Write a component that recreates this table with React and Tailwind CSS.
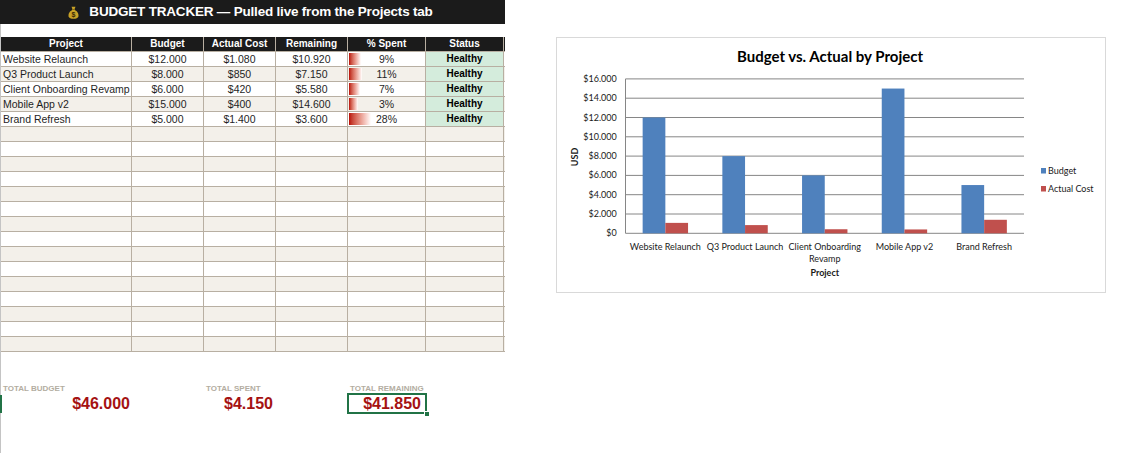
import React from 'react';

const projects = [
  { name: 'Website Relaunch', budget: '$12.000', actual: '$1.080', remaining: '$10.920', pct: 9, bar: 12 },
  { name: 'Q3 Product Launch', budget: '$8.000', actual: '$850', remaining: '$7.150', pct: 11, bar: 13 },
  { name: 'Client Onboarding Revamp', budget: '$6.000', actual: '$420', remaining: '$5.580', pct: 7, bar: 11 },
  { name: 'Mobile App v2', budget: '$15.000', actual: '$400', remaining: '$14.600', pct: 3, bar: 9 },
  { name: 'Brand Refresh', budget: '$5.000', actual: '$1.400', remaining: '$3.600', pct: 28, bar: 22 },
];

const chartData = [
  { label: ['Website Relaunch'], budget: 12000, actual: 1080 },
  { label: ['Q3 Product Launch'], budget: 8000, actual: 850 },
  { label: ['Client Onboarding', 'Revamp'], budget: 6000, actual: 420 },
  { label: ['Mobile App v2'], budget: 15000, actual: 400 },
  { label: ['Brand Refresh'], budget: 5000, actual: 1400 },
];

const yTicks = ['$0', '$2.000', '$4.000', '$6.000', '$8.000', '$10.000', '$12.000', '$14.000', '$16.000'];

const cols = 'grid grid-cols-[131px_72px_72px_72px_78px_78px]';
const cell = 'border-r border-[#b8afa2] overflow-hidden whitespace-nowrap';

// Money bag icon for the title
const MoneyBag = () => (
  <svg width="11" height="13" viewBox="0 0 11 13">
    <path d="M3.5 0.8 L7.5 0.8 L6.6 3 L4.4 3 Z" fill="#c9a227" />
    <rect x="4" y="3" width="3" height="1" fill="#8a6d12" />
    <path d="M4.2 4 C1 5.5 0.2 8.5 0.6 10.5 C1 12.3 3 12.8 5.5 12.8 C8 12.8 10 12.3 10.4 10.5 C10.8 8.5 10 5.5 6.8 4 Z" fill="#c9a227" />
    <text x="5.5" y="11.2" textAnchor="middle" fontSize="7" fontWeight="700" fill="#3a2a05" fontFamily="Liberation Sans, sans-serif">$</text>
  </svg>
);

const Chart = () => {
  const x0 = 68.5;
  const x1 = 467;
  const y0 = 195.3;
  const step = 19.3;
  const cat = (x1 - x0) / 5;
  const bw = 22.7;
  const h = (v) => (v / 16000) * step * 8;
  return (
    <svg width="548" height="254" viewBox="0 0 548 254" style={{ fontFamily: 'Lato, sans-serif' }}>
      <text x="273" y="24" textAnchor="middle" fontSize="15" fontWeight="700" fill="#000">Budget vs. Actual by Project</text>
      {yTicks.map((t, i) => (
        <g key={t}>
          <line x1={x0} x2={x1} y1={y0 - i * step} y2={y0 - i * step} stroke="#868686" strokeWidth="1" />
          <text x="59.7" y={y0 - i * step + 3} textAnchor="end" fontSize="9" fill="#1a1a1a">{t}</text>
        </g>
      ))}
      <line x1={x0} x2={x0} y1={y0 - 8 * step} y2={y0} stroke="#868686" strokeWidth="1" />
      {chartData.map((d, i) => {
        const cx = x0 + cat * (i + 0.5);
        return (
          <g key={d.label[0]}>
            <rect x={cx - bw} y={y0 - h(d.budget)} width={bw} height={h(d.budget)} fill="#4f81bd" />
            <rect x={cx} y={y0 - h(d.actual)} width={bw} height={h(d.actual)} fill="#c0504d" />
            {d.label.map((l, j) => (
              <text key={l} x={cx} y={212 + j * 11.5} textAnchor="middle" fontSize="9" fill="#1a1a1a">{l}</text>
            ))}
          </g>
        );
      })}
      <text x={(x0 + x1) / 2} y="238" textAnchor="middle" fontSize="9" fontWeight="700" fill="#1a1a1a">Project</text>
      <text x="0" y="0" transform="translate(21 119) rotate(-90)" textAnchor="middle" fontSize="9" fontWeight="700" fill="#1a1a1a">USD</text>
      <rect x="484" y="130" width="5" height="5.5" fill="#4f81bd" />
      <text x="491" y="136" fontSize="9" fill="#1a1a1a">Budget</text>
      <rect x="484" y="148" width="5" height="5.5" fill="#c0504d" />
      <text x="491" y="154" fontSize="9" fill="#1a1a1a">Actual Cost</text>
    </svg>
  );
};

export default function App() {
  const emptyRows = Array.from({ length: 15 });
  return (
    <div className="flex bg-white w-[1134px] h-[453px] overflow-hidden text-black" style={{ fontFamily: '"Liberation Sans", Arial, sans-serif' }}>
      {/* Left: budget table */}
      <div className="w-[505px] shrink-0">
        <div className="h-[24px] bg-[#1b1b1b] flex items-center justify-center gap-[10px] pr-[4px]">
          <MoneyBag />
          <span className="text-white font-bold text-[13.5px] tracking-[-0.2px] leading-none">BUDGET TRACKER — Pulled live from the Projects tab</span>
        </div>
        <div className="relative h-[429px] border-l border-[#c4c4c4] pt-[13px]">
          {/* Header row */}
          <div className={`${cols} h-[15px] bg-[#1b1b1b] border-b border-[#b8afa2] text-white font-bold text-[10px] leading-[14px] text-center`}>
            <div className={cell}>Project</div>
            <div className={cell}>Budget</div>
            <div className={cell}>Actual Cost</div>
            <div className={cell}>Remaining</div>
            <div className={cell}>% Spent</div>
            <div className={cell}>Status</div>
          </div>

          {projects.map((p, i) => (
            <div key={p.name} className={`${cols} h-[15px] border-b border-[#b8afa2] text-[10.5px] leading-[14px] text-[#1f1f1f] ${i % 2 ? 'bg-[#f3f0ea]' : 'bg-white'}`}>
              <div className={`${cell} pl-[2px]`}>{p.name}</div>
              <div className={`${cell} text-center`}>{p.budget}</div>
              <div className={`${cell} text-center`}>{p.actual}</div>
              <div className={`${cell} text-center`}>{p.remaining}</div>
              <div className={`${cell} relative text-center`}>
                <div className="absolute left-[1px] top-[1px] h-[12px] bg-linear-to-r from-[#b80000] to-white" style={{ width: p.bar }} />
                <span className="relative">{p.pct}%</span>
              </div>
              <div className={`${cell} text-center font-bold text-[10px] text-black bg-[#d4ecdc]`}>Healthy</div>
            </div>
          ))}

          {emptyRows.map((_, i) => (
            <div key={i} className={`${cols} h-[15px] border-b border-[#b8afa2] ${i % 2 ? 'bg-white' : 'bg-[#f3f0ea]'}`}>
              <div className={cell} />
              <div className={cell} />
              <div className={cell} />
              <div className={cell} />
              <div className={cell} />
              <div className={cell} />
            </div>
          ))}

          {/* Totals */}
          <div className={`${cols} mt-[32px] h-[9px] text-[8px] font-bold leading-[10px] text-[#b3ada1]`}>
            <div className="pl-[2px]">TOTAL BUDGET</div>
            <div />
            <div className="pl-[2px]">TOTAL SPENT</div>
            <div />
            <div className="pl-[2px]">TOTAL REMAINING</div>
            <div />
          </div>
          <div className={`${cols} h-[21px] text-[16px] font-bold leading-[21px] text-[#a51212]`}>
            <div className="text-right pr-[2px]">$46.000</div>
            <div />
            <div className="text-right pr-[3px]">$4.150</div>
            <div />
            <div className="relative -ml-px -mr-px border-2 border-[#217346] text-right pr-[4px] leading-[17px]">
              $41.850
              <div className="absolute right-[-5px] bottom-[-5px] w-[6px] h-[6px] bg-[#217346] border border-white" />
            </div>
            <div />
          </div>
          <div className="absolute left-[-1px] top-[371px] w-[2px] h-[18px] bg-[#217346]" />
        </div>
      </div>

      {/* Right: chart */}
      <div className="ml-[51px] mt-[37px] w-[550px] h-[256px] border border-[#d9d9d9] shrink-0">
        <Chart />
      </div>
    </div>
  );
}
